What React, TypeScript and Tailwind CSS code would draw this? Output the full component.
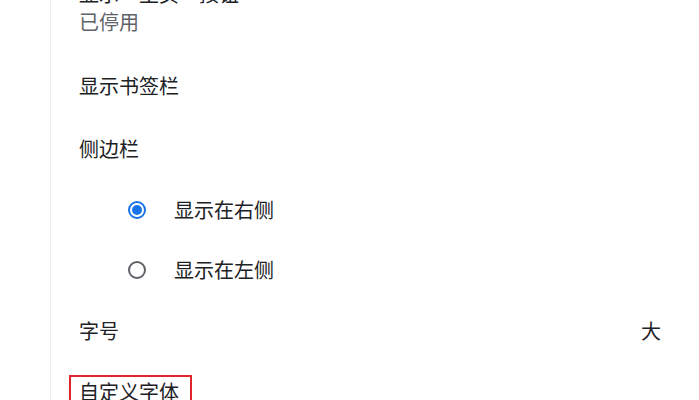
import { useState } from "react";

// Appearance settings section, scrolled so the first row is cut at the top
export default function App() {
  const [side, setSide] = useState<"right" | "left">("right");

  return (
    <div
      className="w-[699px] h-[400px] overflow-hidden bg-white flex text-[#202124] text-[20px]"
      style={{ fontFamily: '"Noto Sans CJK SC", "Noto Sans", sans-serif' }}
    >
      <div className="w-[50px] shrink-0" />
      <div className="flex-1 flex flex-col border-l border-[#ececec] pl-[28px] pr-[38px]">
        {/* Home button row */}
        <div className="mt-[-20px] h-[74px] shrink-0 flex flex-col">
          <div className="leading-[28px]">显示“主页”按钮</div>
          <div className="leading-[28px] text-[#5f6368]">已停用</div>
        </div>

        {/* Bookmarks bar */}
        <div className="h-[64px] shrink-0 flex items-center">显示书签栏</div>

        {/* Side panel */}
        <div className="h-[62px] shrink-0 flex items-center">侧边栏</div>

        <RadioRow
          label="显示在右侧"
          checked={side === "right"}
          onSelect={() => setSide("right")}
          height="h-[59px]"
        />
        <RadioRow
          label="显示在左侧"
          checked={side === "left"}
          onSelect={() => setSide("left")}
          height="h-[61px]"
        />

        {/* Font size */}
        <div className="h-[62px] shrink-0 flex items-center justify-between">
          <span>字号</span>
          <span>大</span>
        </div>

        {/* Custom fonts */}
        <div className="shrink-0 flex items-start">
          <div className="mt-[13px] ml-[-10px] border-2 border-[#e0262b] pl-[8px] pr-[11px] leading-[30px]">
            自定义字体
          </div>
        </div>
      </div>
    </div>
  );
}

function RadioRow({
  label,
  checked,
  onSelect,
  height,
}: {
  label: string;
  checked: boolean;
  onSelect: () => void;
  height: string;
}) {
  return (
    <div
      className={`${height} shrink-0 flex items-center pl-[49px] gap-[28px] cursor-pointer`}
      onClick={onSelect}
    >
      {checked ? (
        <span className="w-[18px] h-[18px] rounded-full border-2 border-[#1a73e8] flex items-center justify-center">
          <span className="w-[10px] h-[10px] rounded-full bg-[#1a73e8]" />
        </span>
      ) : (
        <span className="w-[18px] h-[18px] rounded-full border-2 border-[#5f6368]" />
      )}
      <span>{label}</span>
    </div>
  );
}
